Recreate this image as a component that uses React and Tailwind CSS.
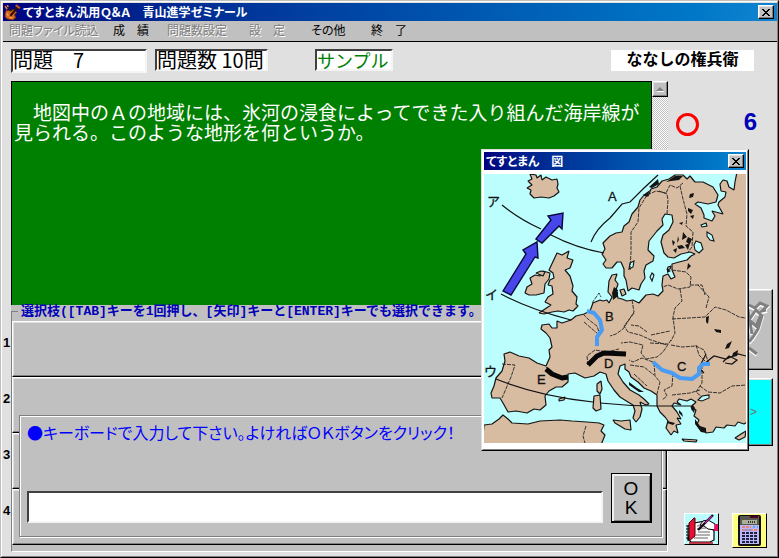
import React from "react";

const jp = "font-['Liberation_Sans','Noto_Sans_CJK_JP',sans-serif]";
const jpOnly = "font-['Noto_Sans_CJK_JP',sans-serif]";
const jpMono = "font-['Liberation_Mono','Noto_Sans_CJK_JP',monospace]";
const raised =
  "border border-t-white border-l-white border-r-black border-b-black shadow-[inset_-1px_-1px_0_#808080,inset_1px_1px_0_#dfdfdf]";
const sunken =
  "border-2 border-t-[#404040] border-l-[#404040] border-r-[#f4f4f4] border-b-[#f4f4f4] bg-white";

const MENU = [
  { label: "問題ファイル読込", disabled: true, width: "w-[84px]" },
  { label: "成　績", width: "w-[34px]" },
  { label: "問題数設定", disabled: true, width: "w-[62px]" },
  { label: "設　定", disabled: true, width: "w-[42px]" },
  { label: "その他", width: "w-10" },
  { label: "終　了", width: "w-[34px]" },
];

const QUESTION = [
  "　地図中のＡの地域には、氷河の浸食によってできた入り組んだ海岸線が",
  "見られる。このような地形を何というか。",
];

function CloseButton() {
  return (
    <button aria-label="閉じる" className={`flex h-[14px] w-4 shrink-0 items-center justify-center bg-[#c0c0c0] ${raised}`}>
      <svg width="8" height="7" viewBox="0 0 8 7" shapeRendering="crispEdges">
        <path d="M0 0h2v1h1v1h2V1h1V0h2v1H7v1H6v1H5v1h1v1h1v1h1v1H6V6H5V5H3v1H2v1H0V6h1V5h1V4h1V3H2V2H1V1H0z" fill="#000" />
      </svg>
    </button>
  );
}

function ViolinIcon() {
  return (
    <svg width="17" height="17" viewBox="0 0 16 16">
      <path d="M3 1l9 14" stroke="#181818" strokeWidth="1.2" />
      <path d="M1 9l1-3 3 0 1 1 3-2 3 3-2 2 1 3-3 2-5-1-2-2z" fill="#d86820" stroke="#702808" strokeWidth=".8" />
      <path d="M6 11L13 3" stroke="#301008" strokeWidth="2" />
      <path d="M11 1l4 3" stroke="#c85818" strokeWidth="2" />
      <path d="M1 2l2 3M3 1l1 2" stroke="#e88030" strokeWidth="1.4" />
      <path d="M3 9l1 2M5 13l3 0" stroke="#ffb060" strokeWidth="1" />
    </svg>
  );
}

function EuropeMap() {
  return (
    <svg className="block h-auto w-full" viewBox="484 174 262 269" role="img" aria-label="ヨーロッパの地図">
      <rect x="484" y="174" width="262" height="269" fill="#bcfefe" />
      <g fill="#d8bca2" stroke="#141414" strokeWidth="1.2" strokeLinejoin="bevel">
        <path d="M527 188l5-3-4-4 4-2-2-5 6 1 1 3 4-3 1 5 4-3 6 3 5-1 1 5-1 4 2 4-5 4-5 2-8-1-7 1-4-4 1-4z" />
        {/* mainland: Kola, Black Sea side, Aegean, Adriatic, Iberia, Atlantic, Baltic, Scandinavia */}
        <path
          d="M737 172L752 172L752 419L744 424L738 422L735 426L727 425L724 428L716 427L713 432L706 433L705 429L701 431L697 424L699 420L694 416L696 410L691 407L696 402L691 399
          L687 401L679 399L677 402L681 405L674 403L672 406L677 412L681 419L677 418L681 424L676 425L678 433L674 431L671 435L666 428L668 421L665 417L660 412L657 406L657 395
          L651 391L644 388L638 382L631 377L629 372L625 369L625 364L620 366L618 374L623 382L630 390L639 395L644 399L649 404L646 405L640 402L642 409L640 417L636 422L633 418L635 411L633 405L628 402L620 397L614 390L608 381L606 374L600 372
          L594 376L585 378L575 373L568 374L568 382L562 387L556 387L549 391L545 396L546 405L540 410L534 409L527 413L516 411L508 412L503 403L500 398L492 398L491 393L494 386L496 378L502 371L505 361L504 354L510 352L519 356L529 358L537 363L546 366
          L550 357L549 350L552 347L550 338L546 333L541 329L542 325L549 324L552 328L557 328L557 321L562 323L571 320L576 316L584 314L590 311L593 303L600 300L603 301L607 300L609 303L612 297L608 292L609 281L612 275L617 274L615 280L618 284L616 290L618 298L622 299L627 301L633 300L639 303L646 295L653 294L658 296L663 291L662 285
          L663 276L668 274L671 279L675 277L672 270L672 264L679 262L687 260L691 256L695 254L690 252L681 254L674 258L668 257L664 253L661 242L663 235L669 230L673 222L672 215L665 214L662 219L663 225L657 231L649 241L648 250L654 256L653 261L646 265L644 271L645 278L641 284L639 290L632 288L628 291L626 280L624 276L624 269L621 262
          L617 262L612 268L606 268L603 264L606 260L602 254L605 249L603 243L607 239L610 236L616 233L622 232L624 226L629 222L632 214L638 207L640 200L644 195L648 196L651 189L657 187L662 181L669 179L675 175L683 175L687 179L690 176L695 182L703 182L713 187L718 195L716 202L708 204L698 202L695 204L701 208L704 215L704 218L712 221L715 216L712 211L723 214L718 205L719 202L725 197L726 192L721 191L720 184L723 180L727 181L729 187L734 190L735 182Z"
        />
        <path d="M557 253l5 2 7-4-2 7 6 2-3 8-5 2 5 6 3 10-1 5 5 6-1 7 2 2-5 5-4-1-5 2-6-1-6 1-8 2-5-1 6-4 6-4-6-3 3-5 5-3-1-8-4-1 2-5 4-2-1-5-4-3z" />
        <path d="M525 293l2-6 5-3-2-6 5-3 5 1 3-5 7 2-1 6-4 5-1 9-8 2-7 0z" />
        <path d="M484 425l8-1 7-5 4-4 5 4 4 4 16 1 12-3 20-1 12 1 15 1 12 1 5 2-3 6 4 4-4 10H482z" />
        <path d="M613 420l8 1 9-1 1 10-6-1-10-6zM594 396l6-1 1 14-5 2-3-3zM597 384l4-3 1 8-2 5-3-3zM559 399l6-2-1 3-5 1zM682 439l15 1-1 2-12-1zM735 438l6-4 5-3-1 6-6 3zM620 290l4-1 2 5-4 2zM668 267l3-1-1 3-3 1zM536 273l5-2 4 1-2 4z" />
      </g>
      <g fill="#bcfefe" stroke="#141414" strokeWidth="1.1">
        <path d="M696 241l5 2 2 6-4 4-4-3-1-5zM707 232l5 3 2 6-4-1-3-4zM701 225l5-2 1 3-5 1zM698 400l4-4 7-1 0 3-7 3zM652 273l2 2-2 6-2-4zM630 263l4-2-1 6-4 2z" />
      </g>
      <g fill="none" stroke="#222" strokeWidth=".9" strokeDasharray="4 1">
        <path d="M630 270l1-18 0-20 7-10 1-14 8-13 9-4 10 2 4-8 7 3 6-5M667 214l1-14-1-6-8-3M680 186l3 13 4 15-1 12 7 6-1 15-4 5M672 270l14 2 5 5-1 10-12 2-10-4-5 2M690 285h12l3 10M680 289l2 12-7 7-2 9 2 16-4 8M632 300l2 12-7 11-4 6-7 5-6 2M634 313l-10 13 4 6 12 3 11 5 16 5M647 332l-8-6-8-1M651 335l19-4M672 319l33-2 10-10 11 3 13 7 7 1M706 308l3-11-11-12M671 340l-8 12-6 5-11 2-5-6 2-8-13-3-9 1M671 345l11 2 14-1 8 4 5 14M650 343l18 1M696 345l3 10 6 6M653 362l-11-4-9 4-4-2M654 363l1 13 5 6-3 12M673 373l-1 13-8 4 3 6-5 4M672 395l18-2 10-3M702 365l0 18-6 9 6 5M700 386l8 6 12 1 12-7 15-1M630 365l14 2 10 8M634 374l13 12M583 314l6 6 8 6 3 9M588 365l-1-9 8-6 12 2 12-3M592 303l7-10 2 4M584 322l14 12M502 364l13 1-4 12-9 21M586 426l-3 10 2 7M546 367l5 5" />
      </g>
      <g fill="none" stroke="#111" strokeWidth="1.2">
        <path d="M502 205q17 14 39 24M551 235q25 13 53 18M591 242q5-13 19-24M610 218l12-14 8-2 14-14 14-13M501 294q28 15 70 26M496 379q42 17 97 23M600 403q28 3 57 3h34M704 364l10-8 12 3 12-5 8 2M706 354l-7 14 5 5M723 362l6-6 8 4-5 4-7-1" />
      </g>
      <g fill="#141414">
        <path d="M690 194l4-1-1 4-4 1zM688 208l5 2-2 4-3-3zM690 216l4-1-1 4zM679 223l4-1-1 3zM672 240l1 6 2-4zM678 236l-1 7 2-3zM683 232l4 5-5 3zM688 237l4 2-2 5-4-2zM677 246l5-1 3 3-6 1zM685 245l5-2-2 7zM673 250l4-2-1 5zM688 263l3 3-4 4zM667 269l4 2-4 2zM614 287l4 3-2 7-4-4zM612 293l6-1 0 4-5 4zM706 317l3-1-1 8-2-2zM714 329l7 1 0 3-5-1zM727 344l5-3-3 7-4 1zM733 353l5-3-1 6-5 1zM692 404l3 4-1 5-3-4zM695 419l5 7 6 2 0 5-5-1-6-8zM652 188l7-4-1-5-9 8zM643 195l7-5-3 7zM666 182l9-6 8 0-4 4-8 1zM667 421l8 2-2 2-6-2zM679 410l3 3 1 4-4-4zM629 382l8 6 7 4-5 0-10-7z" />
      </g>
      <g fill="#4646ea" stroke="#080838" strokeWidth="1.4" strokeLinejoin="miter">
        <path d="M503 291L526 254L523 250L537 242L538 258L535 257L511 295Z" />
        <path d="M536 239L551 220L548 216L563 213L562 229L559 226L542 243Z" />
      </g>
      <g fill="none" strokeLinejoin="round">
        <path d="M587 311l7 2 6 7 2 10-5 7v9" stroke="#489cf4" strokeWidth="4" />
        <path d="M653 362l9 8 10 3 8 5 12 1 7-5 0-6 4-4h7" stroke="#489cf4" strokeWidth="4" />
        <path d="M588 365l9-9 7-3 22 1" stroke="#080808" strokeWidth="5" />
        <path d="M546 369l6 5 10 4 6-1" stroke="#080808" strokeWidth="5" />
      </g>
      <g className={jp} fontSize="13" fill="#111" stroke="#111" strokeWidth=".3">
        <text x="487" y="206">ア</text>
        <text x="485" y="299">イ</text>
        <text x="484" y="376">ウ</text>
        <text x="608" y="201">A</text>
        <text x="605" y="321">B</text>
        <text x="677" y="371">C</text>
        <text x="604" y="368">D</text>
        <text x="537" y="384">E</text>
      </g>
    </svg>
  );
}

function FigureWindow() {
  return (
    <section className="absolute top-[148px] left-[480px] w-[268px] border border-t-[#dfdfdf] border-l-[#dfdfdf] border-r-black border-b-black bg-white">
      <div className="border border-t-white border-l-white border-r-[#808080] border-b-[#808080] p-px">
        <header className="flex h-[18px] items-center bg-linear-to-r from-[#000080] to-[#1084d0] pr-0.5 pl-0.5 text-white">
          <h2 className={`flex-1 text-[12px] leading-[16px] font-bold [font-feature-settings:'palt'] ${jpOnly}`}>てすとまん　図</h2>
          <CloseButton />
        </header>
        <div className="bg-white pt-1 pb-[5px]">
          <EuropeMap />
        </div>
      </div>
    </section>
  );
}

function NotebookIcon() {
  return (
    <svg width="33" height="30" viewBox="0 0 33 30">
      <rect width="33" height="30" fill="#b8fcfc" />
      <path d="M9 9l12-2 8 10v9l-4 2H6l-3-3z" fill="#fff" stroke="#000" strokeWidth="1.2" />
      <path d="M4 9l5-5h1v18l-6 5z" fill="#e81038" stroke="#400" />
      <path d="M3 11v16M1 12h3M1 15h3M1 18h3M1 21h3M1 24h3" stroke="#000" />
      <path d="M12 12l5-1M12 15l9-1M13 18h12M11 21h14M9 24h14" stroke="#999" strokeWidth="1.5" />
      <path d="M15 11l3-4 5-1 7 4v6l-7-1-4-3z" fill="#fff" stroke="#000" />
      <path d="M30 10h3v7h-4z" fill="#e81060" />
      <path d="M13 16L28 1" stroke="#180818" strokeWidth="2.4" />
      <path d="M20 9l7-7" stroke="#b020b0" strokeWidth="1.2" />
      <path d="M4 29h24" stroke="#c01020" strokeWidth="1.6" />
    </svg>
  );
}

function CalculatorIcon() {
  const cols = [9, 13, 17, 21];
  const rows = [18, 21, 24, 27];
  return (
    <svg width="33" height="33" viewBox="0 0 33 33">
      <rect width="33" height="33" fill="#ffff80" />
      <rect x="5" y="1" width="23" height="31" rx="2" fill="#101010" />
      <rect x="7" y="2" width="19" height="28" fill="#b8b8f8" />
      <rect x="7" y="2" width="19" height="9" fill="#585850" />
      <rect x="17" y="2" width="8" height="2" fill="#500020" />
      <rect x="9" y="6" width="15" height="4" fill="#a8b098" />
      <path d="M15 8h8" stroke="#303030" strokeWidth="2" strokeDasharray="1 1" />
      <path d="M9 13h9M9 16h15" stroke="#ff7050" strokeWidth="1.6" strokeDasharray="3 1" />
      <path d="M20 13h5M12 16h8" stroke="#40a0ff" strokeWidth="1.4" strokeDasharray="2 2" />
      {rows.map((y) => cols.map((x) => <rect key={`${x}-${y}`} x={x} y={y} width="3" height="2" fill="#202040" />))}
    </svg>
  );
}

function StatusColumn() {
  return (
    <aside className="flex w-[109px] shrink-0 flex-col px-1">
      <div className="flex h-[208px] items-start justify-between pt-7 pr-4 pl-1">
        <svg className="mt-1" width="23" height="23" viewBox="0 0 23 23" role="img" aria-label="正解">
          <circle cx="11.5" cy="11.5" r="10" fill="none" stroke="#f00" strokeWidth="3" />
        </svg>
        <output className="font-['Liberation_Sans',sans-serif] text-[24px] leading-[26px] font-bold text-[#0000b8]">6</output>
      </div>
      <button aria-label="図" className={`flex h-[81px] items-center justify-end bg-[#c0c0c0] pr-0.5 ${raised}`}>
        <svg width="24" height="66" viewBox="0 0 24 66" fill="none">
          <path d="M3 9l6 3 5-5 7 3-5 5 5-1M9 13l7 7-4 13-5 8-4 5M9 15l-6 9 7 6 5-12M3 52l8 6M2 14l4 24" stroke="#fff" strokeWidth="4" />
          <path d="M3 8l6 3 5-5 7 3-5 5 4-1M9 12l7 7-4 13-5 8-4 5M9 14l-6 9 7 6 5-12M3 51l8 6M2 13l4 24" stroke="#808080" strokeWidth="3" />
        </svg>
      </button>
      <button className={`mt-2 flex h-[68px] items-center justify-end bg-[#00ffff] pr-[15px] text-[12px] text-[#707070] ${raised} ${jp}`}>&gt;</button>
      <div className="mt-auto mb-2 flex items-start justify-end gap-[13px] pr-[6px]">
        <button aria-label="ノート" className={`h-8 w-[35px] ${raised}`}>
          <NotebookIcon />
        </button>
        <button aria-label="電卓" className={`h-[35px] w-[35px] bg-[#ffff80] ${raised}`}>
          <CalculatorIcon />
        </button>
      </div>
    </aside>
  );
}

function AnswerPanel() {
  return (
    <form
      onSubmit={(e) => e.preventDefault()}
      className="absolute top-[94px] right-[5px] left-[7px] h-[122px] border border-[#808080] bg-[#c0c0c0] px-[7px] pt-[6px] shadow-[inset_1px_1px_0_#fff,1px_1px_0_#fff]"
    >
      <label htmlFor="answer" className={`block text-[16px] leading-5 text-[#0000ff] [font-feature-settings:'palt'] ${jpOnly}`}>
        ●キーボードで入力して下さい。よければＯＫボタンをクリック！
      </label>
      <div className="mt-[31px] flex items-end gap-2 pr-0.5">
        <input id="answer" type="text" className={`h-8 min-w-0 flex-1 px-1 text-[16px] outline-none ${sunken} ${jp}`} />
        <button
          className={`h-[50px] w-[41px] border border-r-2 border-b-2 border-black bg-[#c0c0c0] text-[19px] leading-[19px] shadow-[inset_2px_2px_0_#f0f0f0,inset_-1px_-1px_0_#808080] ${jp}`}
        >
          O
          <br />K
        </button>
      </div>
    </form>
  );
}

function Choices() {
  return (
    <div className="flex bg-[#e0e0e0]">
      <ol className="w-2 shrink-0 pt-4">
        {[1, 2, 3, 4].map((n) => (
          <li key={n} className="flex h-14 items-center pb-3 font-['Liberation_Sans',sans-serif] text-[13px] font-bold">
            {n}
          </li>
        ))}
      </ol>
      <div className="min-w-0 flex-1 bg-[#c0c0c0]">
        <fieldset className="border border-t-[#808080] border-r-white border-b-white border-l-[#808080] pb-[6px]">
          <legend className={`ml-[6px] px-[3px] text-[13px] leading-[13px] font-bold whitespace-nowrap text-[#0000b8] ${jpMono}`}>
            選択枝([TAB]キーを1回押し、[矢印]キーと[ENTER]キーでも選択できます。
          </legend>
          <div className="relative mt-[3px]">
            {[1, 2, 3, 4].map((n) => (
              <button
                key={n}
                aria-label={`選択枝${n}`}
                className="block h-14 w-full border border-t-white border-r-black border-b-black border-l-white shadow-[inset_-1px_-1px_0_#808080,inset_1px_1px_0_#dfdfdf]"
              />
            ))}
            <AnswerPanel />
          </div>
        </fieldset>
      </div>
    </div>
  );
}

export default function App() {
  return (
    <div className="relative flex min-h-screen flex-col border border-t-[#c0c0c0] border-r-black border-b-black border-l-[#c0c0c0] bg-[#e0e0e0] text-black">
      <div className="flex flex-1 flex-col border border-t-white border-r-[#808080] border-b-[#808080] border-l-white pt-px pl-px">
        <header className="flex h-[18px] items-center gap-0.5 bg-linear-to-r from-[#000080] to-[#1084d0] pr-[3px] pl-px text-white">
          <ViolinIcon />
          <h1 className={`flex-1 text-[12px] leading-[16px] font-bold whitespace-nowrap [font-feature-settings:'palt'] ${jpOnly}`}>
            てすとまん汎用Ｑ＆Ａ　青山進学ゼミナール
          </h1>
          <CloseButton />
        </header>
        <nav className={`flex h-[21px] items-center gap-5 border-b border-black bg-[#c0c0c0] pb-0.5 pl-1.5 text-[12px] leading-4 whitespace-nowrap [font-feature-settings:'palt'] ${jpOnly}`}>
          {MENU.map((item) => (
            <button
              key={item.label}
              disabled={item.disabled}
              className={`${item.width} text-left disabled:text-[#808080] disabled:[text-shadow:1px_1px_0_#fff]`}
            >
              {item.label}
            </button>
          ))}
        </nav>
        <div className={`mt-[7px] flex h-8 shrink-0 items-start pl-2 text-[20px] leading-[18px] whitespace-pre ${jpOnly}`}>
          <output className={`h-6 w-[136px] ${sunken}`}>問題　7</output>
          <output className={`ml-2 h-[22px] w-[113px] ${sunken}`}>問題数 10問</output>
          <output className={`ml-[47px] h-[22px] w-[78px] text-[18px] text-[#008000] ${sunken}`}>サンプル</output>
          <output className="mt-px mr-[23px] ml-auto h-[21px] w-[143px] bg-white text-center text-[16px] leading-4 font-bold">ななしの権兵衛</output>
        </div>
        <div className="flex flex-1">
          <main className="min-w-0 flex-1">
            <div className="ml-2 flex h-[224px]">
              <div className={`min-w-0 flex-1 border border-b-0 border-black bg-[#008000] pt-5 pl-0.5 text-[19px] leading-5 text-white ${jpOnly}`}>
                {QUESTION.map((line) => (
                  <p key={line}>{line}</p>
                ))}
              </div>
              <div className="w-4 shrink-0 bg-[repeating-conic-gradient(#c0c0c0_0_25%,#fff_0_50%)] bg-[length:2px_2px]">
                <button aria-label="上へ" className={`flex h-4 w-4 items-center justify-center bg-[#c0c0c0] ${raised}`}>
                  <svg width="8" height="5" viewBox="0 0 8 5">
                    <path d="M4 0l4 4H0z" fill="#808080" />
                    <path d="M1 4.5h7" stroke="#fff" />
                  </svg>
                </button>
              </div>
            </div>
            <Choices />
          </main>
          <StatusColumn />
        </div>
      </div>
      <FigureWindow />
    </div>
  );
}
